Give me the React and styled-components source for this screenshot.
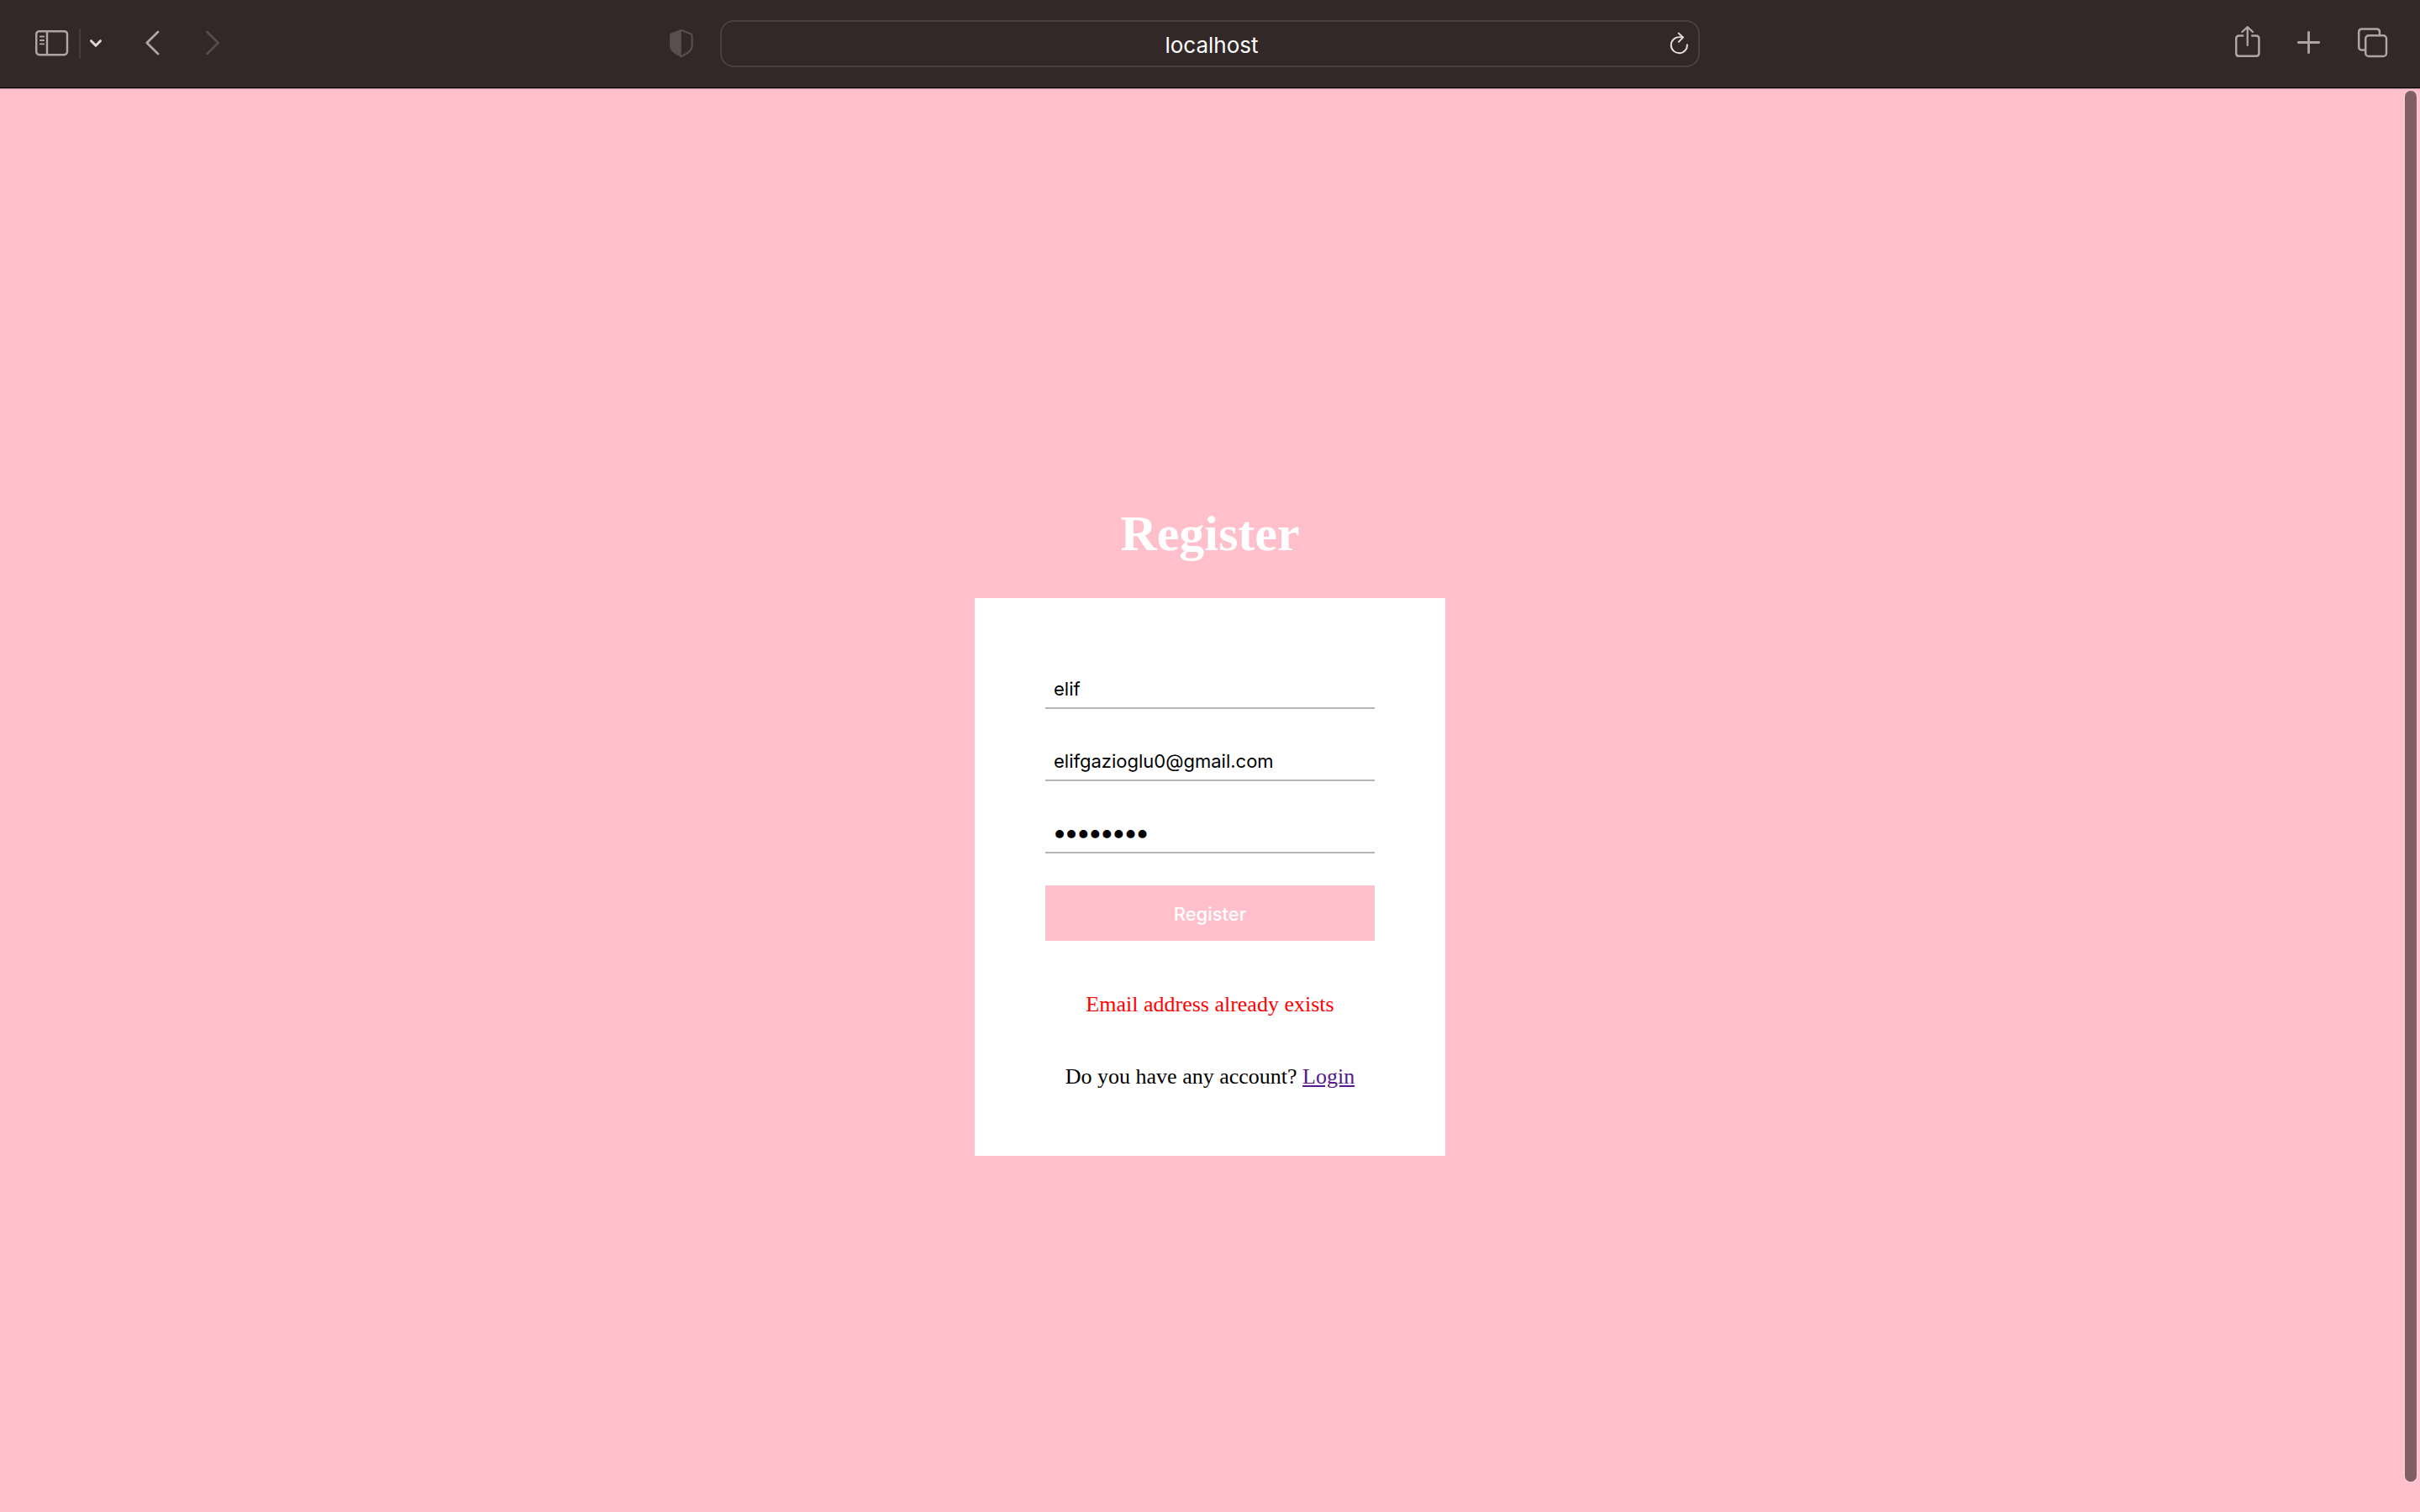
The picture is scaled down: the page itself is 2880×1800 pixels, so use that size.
import React from "react";
import styled, { createGlobalStyle } from "styled-components";

const PINK = "#ffbfcb";
const CHROME = "#332828";
const ICON = "#b0a4a5";
const SANS = 'Inter, "Liberation Sans", sans-serif';
const SERIF = '"Liberation Serif", "Times New Roman", serif';

const GlobalStyle = createGlobalStyle`
  *, *::before, *::after { box-sizing: border-box; }
  html, body { margin: 0; padding: 0; background: ${PINK}; }
  body { font-family: ${SERIF}; color: #000; }
`;

const Window = styled.div`
  position: relative;
  display: flex;
  flex-direction: column;
  min-height: 100vh;
`;

const Toolbar = styled.header`
  display: grid;
  grid-template-columns: 1fr minmax(0, 1166px) 1fr;
  align-items: center;
  height: 106px;
  padding: 0 38px 1px;
  background: ${CHROME};
  border-bottom: 1px solid #a58086;
  box-shadow: inset 0 -1px 0 #000;
`;

const LeftTools = styled.div`
  display: flex;
  align-items: center;
  justify-content: space-between;
  padding: 0 32px 0 4px;
`;

const ToolGroup = styled.div`
  display: flex;
  align-items: center;
  justify-content: flex-end;
  gap: ${(p) => p.$gap}px;
`;

const Divider = styled.span`
  width: 2px;
  height: 36px;
  background: #473b3c;
`;

const IconButton = styled.button`
  display: flex;
  padding: 0;
  border: 0;
  background: none;
  color: ${(p) => p.$color || ICON};

  svg {
    display: block;
    fill: none;
    stroke: currentColor;
    stroke-width: 2.5;
    stroke-linecap: round;
    stroke-linejoin: round;
  }
`;

const AddressBar = styled.div`
  display: flex;
  align-items: center;
  height: 56px;
  padding: 0 10px 0 40px;
  border: 2px solid #4b3f40;
  border-radius: 16px;
`;

const AddressInput = styled.input`
  flex: 1;
  min-width: 0;
  height: 52px;
  padding: 2px 0 0;
  border: 0;
  outline: 0;
  background: none;
  color: #fff;
  font: 400 26px ${SANS};
  text-align: center;
`;

const Page = styled.main`
  flex: 1;
  display: flex;
  flex-direction: column;
  align-items: center;
  justify-content: center;
  gap: 44px;
  padding-top: 72px;
  background: ${PINK};
`;

const Title = styled.h1`
  margin: 0;
  color: #fff;
  font-size: 60px;
  line-height: 66px;
  font-weight: 700;
`;

const Card = styled.section`
  width: 560px;
  max-width: 100%;
  padding: 84px 84px 79px;
  background: #fff;
`;

const Form = styled.form`
  display: flex;
  flex-direction: column;
  gap: 38px;
`;

const Field = styled.input`
  width: 100%;
  height: 48px;
  padding: 2px 10px 0;
  border: 0;
  border-bottom: 2px solid #b5b5b5;
  border-radius: 0;
  outline: 0;
  background: none;
  color: #000;
  font: 400 22px ${SANS};

  &[type="password"] {
    padding-top: 0;
    font-size: 25px;
    -webkit-text-stroke: 2px #000;
  }
`;

const SubmitButton = styled.button`
  height: 66px;
  padding: 2px 0 0;
  border: 0;
  background: ${PINK};
  color: #fff;
  font: 500 22px ${SANS};
`;

const Notes = styled.div`
  display: flex;
  flex-direction: column;
  gap: 56px;
  margin-top: 61px;
`;

const Note = styled.p`
  margin: 0;
  color: ${(p) => (p.$error ? "#ff0000" : "#000")};
  font-size: 26px;
  line-height: 30px;
  text-align: center;
`;

const LoginLink = styled.a`
  color: #551a8b;
  text-decoration: underline;
`;

const ScrollThumb = styled.div`
  position: absolute;
  top: 108px;
  right: 4px;
  bottom: 36px;
  width: 14px;
  border-radius: 7px;
  background: #7f6065;
  box-shadow: 0 0 0 2px #ffc8d2;
`;

export default function App() {
  return (
    <Window>
      <GlobalStyle />
      <Toolbar>
        <LeftTools>
          <ToolGroup $gap={50}>
            <ToolGroup $gap={10}>
              <IconButton type="button" aria-label="Show sidebar">
                <svg width="42" height="48" viewBox="0 0 42 48">
                  <rect x="1.2" y="9.2" width="36.8" height="28" rx="3.6" />
                  <path d="M14 9.5v27.5" />
                  <path d="M5.8 15.5h4.4M5.8 20h4.4M5.8 24.4h4.4" strokeWidth="1.8" />
                </svg>
              </IconButton>
              <Divider />
              <IconButton type="button" aria-label="Tab groups" $color="#e0d4d5">
                <svg width="16" height="48" viewBox="0 0 16 48">
                  <path d="M2.5 20.7L8 26.3L13.5 20.7" strokeWidth="3" />
                </svg>
              </IconButton>
            </ToolGroup>
            <ToolGroup $gap={54}>
              <IconButton type="button" aria-label="Back">
                <svg width="18" height="48" viewBox="0 0 18 48">
                  <path d="M16 10L2.8 23L16 36" strokeWidth="2.8" />
                </svg>
              </IconButton>
              <IconButton type="button" aria-label="Forward" $color="#574b4c">
                <svg width="18" height="48" viewBox="0 0 18 48">
                  <path d="M2.5 10L15.7 23L2.5 36" strokeWidth="2.8" />
                </svg>
              </IconButton>
            </ToolGroup>
          </ToolGroup>
          <IconButton type="button" aria-label="Privacy report" $color="#5a4e4f">
            <svg width="28" height="48" viewBox="0 0 28 48">
              <path
                d="M13.8 8L25.2 12.2Q26.6 12.8 26.6 14.4V26.5C26.6 32.5 20.5 35.6 13.8 39.2C7 35.6 1 32.5 1 26.5V14.4Q1 12.8 2.4 12.2Z"
                strokeWidth="2.1"
              />
              <path
                d="M13.8 8V39.2C7 35.6 1 32.5 1 26.5V14.4Q1 12.8 2.4 12.2Z"
                fill="currentColor"
                stroke="none"
              />
            </svg>
          </IconButton>
        </LeftTools>
        <AddressBar>
          <AddressInput aria-label="Address" defaultValue="localhost" />
          <IconButton type="button" aria-label="Reload" $color="#e8dfe0">
            <svg width="26" height="48" viewBox="0 0 26 48">
              <path d="M22.9 25.2A9.6 9.6 0 1 1 13.3 16.1Q15.7 16 17.6 16.4" strokeWidth="1.9" />
              <path d="M12.7 11.6L18 16.5L12.7 21.8" strokeWidth="1.9" />
            </svg>
          </IconButton>
        </AddressBar>
        <ToolGroup $gap={40}>
          <IconButton type="button" aria-label="Share">
            <svg width="32" height="48" viewBox="0 0 32 48">
              <path d="M9.2 14.4H4.8Q1.2 14.4 1.2 18V35.2Q1.2 38.8 4.8 38.8H24.8Q28.4 38.8 28.4 35.2V18Q28.4 14.4 24.8 14.4H20.2" />
              <path d="M14.7 26V4.3M8.3 10L14.7 4.2L21 10" strokeWidth="2.3" />
            </svg>
          </IconButton>
          <IconButton type="button" aria-label="New tab">
            <svg width="32" height="48" viewBox="0 0 32 48">
              <path d="M3.3 22.5H27.7M15.5 10.3V34.7" strokeWidth="2.8" />
            </svg>
          </IconButton>
          <IconButton type="button" aria-label="Tab overview">
            <svg width="38" height="48" viewBox="0 0 38 48">
              <rect x="11.2" y="14.2" width="24.8" height="24.8" rx="3.8" />
              <path d="M11 31.6H7Q3.2 31.6 3.2 27.8V10.2Q3.2 6.4 7 6.4H24.2Q28 6.4 28 10.2V14" />
            </svg>
          </IconButton>
        </ToolGroup>
      </Toolbar>
      <Page>
        <Title>Register</Title>
        <Card>
          <Form onSubmit={(e) => e.preventDefault()}>
            <Field type="text" aria-label="Username" defaultValue="elif" />
            <Field type="email" aria-label="Email" defaultValue="elifgazioglu0@gmail.com" />
            <Field type="password" aria-label="Password" defaultValue="elif1234" />
            <SubmitButton type="submit">Register</SubmitButton>
          </Form>
          <Notes>
            <Note $error role="alert">Email address already exists</Note>
            <Note>
              Do you have any account? <LoginLink href="#login">Login</LoginLink>
            </Note>
          </Notes>
        </Card>
      </Page>
      <ScrollThumb />
    </Window>
  );
}
